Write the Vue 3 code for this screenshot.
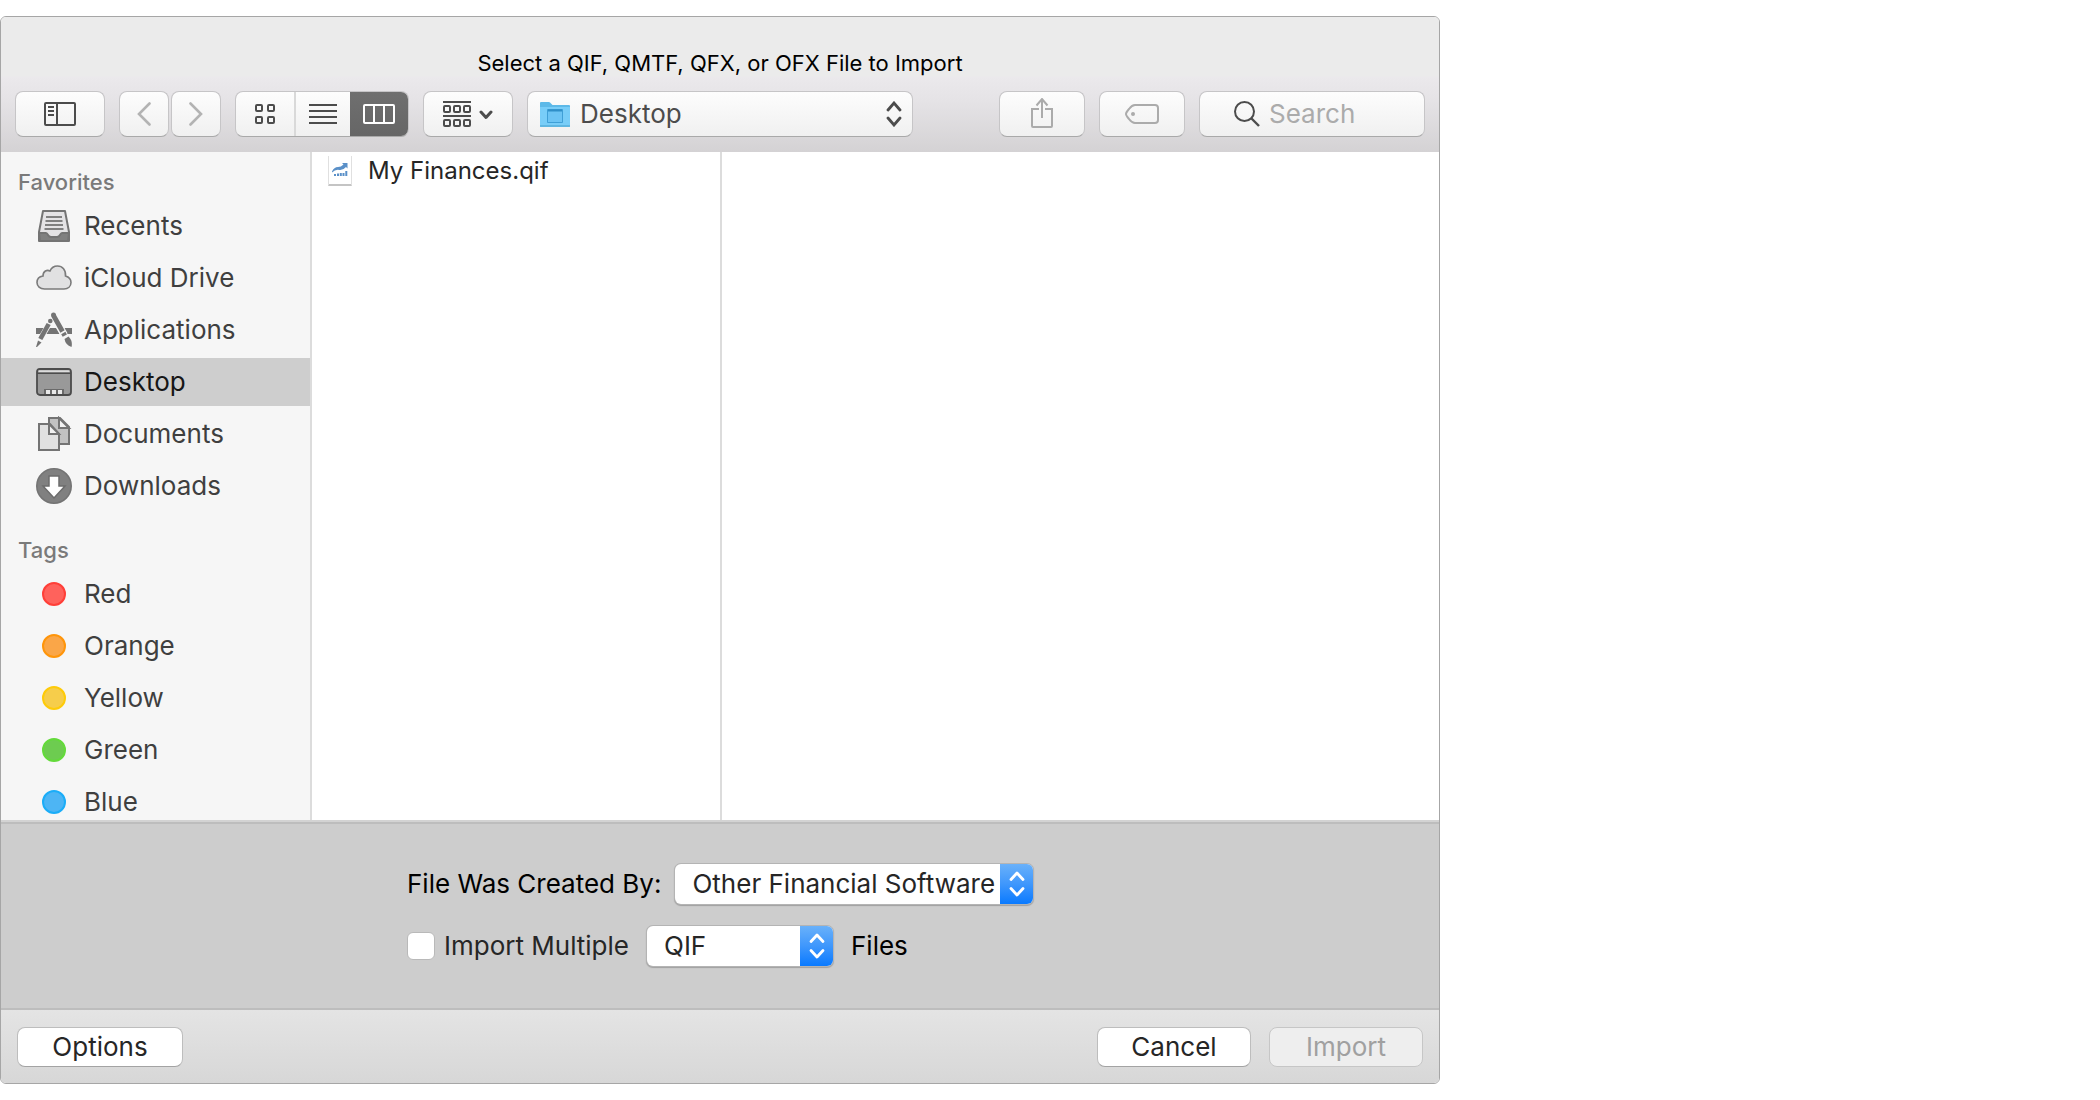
<script setup>
import { ref } from 'vue'

const favorites = [
  { id: 'recents', name: 'Recents' },
  { id: 'icloud', name: 'iCloud Drive' },
  { id: 'applications', name: 'Applications' },
  { id: 'desktop', name: 'Desktop' },
  { id: 'documents', name: 'Documents' },
  { id: 'downloads', name: 'Downloads' },
]
const tags = ['Red', 'Orange', 'Yellow', 'Green', 'Blue']

const place = ref('desktop')
const view = ref('columns')
const folder = ref('Desktop')
const search = ref('')
const createdBy = ref('Other Financial Software')
const multiple = ref(false)
const fileType = ref('QIF')
</script>

<template>
  <main class="dialog">
    <header class="head">
      <h1 class="title">Select a QIF, QMTF, QFX, or OFX File to Import</h1>
      <div class="toolbar">
        <button class="tool wide" type="button" aria-label="Toggle sidebar">
          <svg width="32" height="24" viewBox="0 0 32 24" fill="none" stroke="#4c4c4c" stroke-width="2">
            <rect x="1" y="1" width="30" height="22" rx="1" />
            <path d="M13 1v22M4 5h6M4 9h6M4 13h6" />
          </svg>
        </button>

        <div class="nav">
          <button class="tool arrow" type="button" aria-label="Back">
            <svg width="14" height="24" viewBox="0 0 14 24" fill="none" stroke="#b3b3b3" stroke-width="2.6" stroke-linecap="round">
              <path d="M12.5 1.5L2 12l10.5 10.5" />
            </svg>
          </button>
          <button class="tool arrow" type="button" aria-label="Forward">
            <svg width="14" height="24" viewBox="0 0 14 24" fill="none" stroke="#b3b3b3" stroke-width="2.6" stroke-linecap="round">
              <path d="M1.5 1.5L12 12 1.5 22.5" />
            </svg>
          </button>
        </div>

        <div class="views" role="group" aria-label="View">
          <button type="button" :class="{ on: view === 'icons' }" aria-label="Icons" @click="view = 'icons'">
            <svg width="20" height="20" viewBox="0 0 20 20" fill="none" stroke="currentColor" stroke-width="2">
              <rect x="1" y="1" width="6" height="6" rx="1" />
              <rect x="13" y="1" width="6" height="6" rx="1" />
              <rect x="1" y="13" width="6" height="6" rx="1" />
              <rect x="13" y="13" width="6" height="6" rx="1" />
            </svg>
          </button>
          <button type="button" :class="{ on: view === 'list' }" aria-label="List" @click="view = 'list'">
            <svg width="28" height="20" viewBox="0 0 28 20" stroke="currentColor" stroke-width="2">
              <path d="M0 1h28M0 7h28M0 13h28M0 19h28" />
            </svg>
          </button>
          <button type="button" :class="{ on: view === 'columns' }" aria-label="Columns" @click="view = 'columns'">
            <svg width="32" height="20" viewBox="0 0 32 20" fill="none" stroke="currentColor" stroke-width="2">
              <rect x="1" y="1" width="30" height="18" rx="1" />
              <path d="M11 1v18M21 1v18" />
            </svg>
          </button>
        </div>

        <button class="tool wide" type="button" aria-label="Arrange">
          <svg width="50" height="26" viewBox="0 0 50 26" fill="none" stroke="#4c4c4c" stroke-width="2">
            <path d="M0 1h28M0 15h28" />
            <rect x="1" y="5" width="6" height="6" rx="1" />
            <rect x="11" y="5" width="6" height="6" rx="1" />
            <rect x="21" y="5" width="6" height="6" rx="1" />
            <rect x="1" y="19" width="6" height="6" rx="1" />
            <rect x="11" y="19" width="6" height="6" rx="1" />
            <rect x="21" y="19" width="6" height="6" rx="1" />
            <path d="M38 11l5 5.5 5-5.5" stroke-width="3" stroke-linecap="round" stroke-linejoin="round" />
          </svg>
        </button>

        <div class="tool place">
          <svg width="30" height="26" viewBox="0 0 30 26">
            <path d="M0 2q0-1 1-1h8q1 0 2 1.5L12.5 4H29q1 0 1 1v3H0z" fill="#5db9e8" />
            <path d="M0 6h30v19q0 1-1 1H1q-1 0-1-1z" fill="#78cdf8" />
            <path d="M0 25h30" stroke="#57aeda" stroke-width="1.5" />
            <path d="M7.5 8.500h15v13h-15z" fill="#6cc4f4" stroke="#3f9fd6" />
            <path d="M8 9.500h14" stroke="#2f8fc8" stroke-width="2" />
          </svg>
          <select v-model="folder" aria-label="Folder">
            <option>Desktop</option>
            <option>Documents</option>
          </select>
          <svg class="stepper" width="16" height="26" viewBox="0 0 16 26" fill="none" stroke="#4c4c4c" stroke-width="2.8" stroke-linecap="round">
            <path d="M2 9l6-7 6 7M2 17l6 7 6-7" />
          </svg>
        </div>

        <span class="spring"></span>

        <button class="tool small" type="button" aria-label="Share">
          <svg width="22" height="32" viewBox="0 0 22 32" fill="none" stroke="#ababab" stroke-width="2">
            <path d="M8 11H1v17q0 1 1 1h18q1 0 1-1V11h-7M11 20V1M5.500 7.500L11 1 16.500 7.500" />
          </svg>
        </button>
        <button class="tool small" type="button" aria-label="Edit tags">
          <svg width="34" height="20" viewBox="0 0 34 20" fill="none" stroke="#ababab" stroke-width="2">
            <path d="M10 1h20q3 0 3 3v12q0 3-3 3H10Q7 19 4 15 1 11.500 1 10T4 5Q7 1 10 1z" />
            <circle cx="8" cy="10" r="2" fill="#ababab" stroke="none" />
          </svg>
        </button>
        <label class="tool search">
          <svg width="26" height="26" viewBox="0 0 26 26" fill="none" stroke="#4c4c4c" stroke-width="2">
            <circle cx="10.500" cy="10.500" r="9.500" />
            <path d="M17 17l8 8" stroke-width="2.4" />
          </svg>
          <input v-model="search" type="search" placeholder="Search" aria-label="Search" />
        </label>
      </div>
    </header>

    <section class="browser">
      <nav class="sidebar">
        <h2>Favorites</h2>
        <a
          v-for="item in favorites"
          :key="item.id"
          href="#"
          :class="{ current: item.id === place }"
          @click.prevent="place = item.id"
        >
          <svg v-if="item.id === 'recents'" class="glyph" viewBox="0 0 36 36">
            <path d="M7 3h22l4 21v9H3v-9z" fill="#e4e3e5" stroke="#747474" stroke-width="2" stroke-linejoin="round" />
            <path d="M10 9h16M9.500 13h17M9 17h18M8.500 21h19" stroke="#808080" stroke-width="2" />
            <path d="M3 25h7q1 0 2 2t3 2h6q2 0 3-2t2-2h7l-1 8H4z" fill="#808080" stroke="#747474" stroke-width="2" stroke-linejoin="round" />
          </svg>
          <svg v-else-if="item.id === 'icloud'" class="glyph" viewBox="0 0 36 36">
            <path d="M8.500 29C4 29 1 26 1 22.500c0-3.500 2.500-6 6-6.500 0-5 4-6.500 7-5C15.500 7.500 18 6 21.500 6c5 0 8.500 4 8 10C33 17 35 19.500 35 22.500c0 4-3 6.500-7 6.500z" fill="#e1e1e2" stroke="#7b7b7b" stroke-width="1.6" />
          </svg>
          <svg v-else-if="item.id === 'applications'" class="glyph" viewBox="0 0 36 36">
            <path d="M0 16h7.500L4 22H0zM14 16h6l3.500 6H10.500zM28 16h8v6h-4.500z" fill="#747474" />
            <path d="M17.500 3.500L28.500 23" stroke="#f6f6f6" stroke-width="7" />
            <circle cx="17.500" cy="3" r="2.500" fill="#747474" />
            <path d="M17.500 3.500L26.500 19.500M27.300 21L28.800 23.700" stroke="#747474" stroke-width="4.8" />
            <path d="M28.500 27l4-2.500q4.500 4.500 3 10.500-6-2-7-8z" fill="#747474" />
            <circle cx="14.300" cy="9" r="2.300" fill="#747474" />
            <path d="M12.700 12L4.300 27" stroke="#747474" stroke-width="4.600" />
            <path d="M2 28.500l3.500 2L1 35H0z" fill="#747474" />
          </svg>
          <svg v-else-if="item.id === 'desktop'" class="glyph" viewBox="0 0 36 36">
            <rect x="1" y="5" width="34" height="26" rx="3" fill="#999" stroke="#4c4c4c" stroke-width="1.8" />
            <path d="M2.500 7.300h31" stroke="#dcdcdc" stroke-width="2" />
            <path d="M1 9.200h34" stroke="#4c4c4c" stroke-width="1.6" />
            <path d="M8 30v-5h20v5z" fill="#6a6a6a" />
            <path d="M10 26h4v4h-4zM16 26h4v4h-4zM22 26h4v4h-4z" fill="#e8e8e8" />
          </svg>
          <svg v-else-if="item.id === 'documents'" class="glyph" viewBox="0 0 36 36" stroke="#747474" stroke-width="2">
            <path d="M13 2h11l9 9v17H13z" fill="#c2c2c2" />
            <path d="M23 2v10h10z" fill="#f2f2f2" />
            <path d="M3 8h11l9 10v16H3z" fill="#e1e1e1" />
            <path d="M13 8v10h10z" fill="#f2f2f2" />
          </svg>
          <svg v-else class="glyph" viewBox="0 0 36 36">
            <circle cx="18" cy="18" r="17.200" fill="#808080" stroke="#747474" stroke-width="1.6" />
            <path d="M13 8h10v10h6L18 30 7 18h6z" fill="#fff" stroke="#6c6c6c" stroke-width="1.5" />
          </svg>
          <span>{{ item.name }}</span>
        </a>

        <h2>Tags</h2>
        <a v-for="tag in tags" :key="tag" href="#" @click.prevent>
          <i class="dot" :class="tag.toLowerCase()"></i>
          <span>{{ tag }}</span>
        </a>
      </nav>

      <div class="column files">
        <button class="file" type="button">
          <svg width="26" height="32" viewBox="0 0 26 32">
            <rect x="1" y="2" width="24" height="29" rx="1" fill="#c4c4c4" />
            <rect x="2" y="0" width="22" height="29" fill="#fff" />
            <path d="M1.500 1v29M24.500 1v29" stroke="#e0e0e0" />
            <path d="M5 16.500q2-4.500 6-4.500 3 0 5.500-2.500L15 8h5.500v5.500L19 12q-3 3.500-6.500 3-4-1-7.500 2.500z" fill="#5a90c8" />
            <path d="M7 19h2v2H7zM10 18.500h2V21h-2zM12.800 18h2v3h-2zM15.500 18h2v3h-2zM18.300 16h2v5h-2z" fill="#5a90c8" />
          </svg>
          <span>My Finances.qif</span>
        </button>
      </div>
      <div class="column rest"></div>
    </section>

    <form class="options" @submit.prevent>
      <div class="row source-row">
        <label for="created-by">File Was Created By:</label>
        <div class="popup source">
          <select id="created-by" v-model="createdBy">
            <option>Other Financial Software</option>
            <option>Quicken</option>
          </select>
          <span class="cap">
            <svg width="16" height="26" viewBox="0 0 16 26" fill="none" stroke="#fff" stroke-width="2.8" stroke-linecap="round" stroke-linejoin="round">
              <path d="M2 8.500L8 2l6 6.500M2 17.500L8 24l6-6.500" />
            </svg>
          </span>
        </div>
      </div>
      <div class="row">
        <label class="check">
          <input v-model="multiple" type="checkbox" />
          <span>Import Multiple</span>
        </label>
        <div class="popup type">
          <select v-model="fileType" aria-label="File type">
            <option>QIF</option>
            <option>QFX</option>
            <option>OFX</option>
          </select>
          <span class="cap">
            <svg width="16" height="26" viewBox="0 0 16 26" fill="none" stroke="#fff" stroke-width="2.8" stroke-linecap="round" stroke-linejoin="round">
              <path d="M2 8.500L8 2l6 6.500M2 17.500L8 24l6-6.500" />
            </svg>
          </span>
        </div>
        <span>Files</span>
      </div>
    </form>

    <footer class="foot">
      <button class="push first" type="button">Options</button>
      <span class="spring"></span>
      <button class="push" type="button">Cancel</button>
      <button class="push" type="button" disabled>Import</button>
    </footer>
  </main>
</template>

<style>
body {
  background: #fff;
}
</style>

<style scoped>
.dialog,
.dialog * {
  box-sizing: border-box;
}
.dialog {
  width: 100%;
  max-width: 1440px;
  margin-top: 16px;
  border: 1px solid #a6a6a6;
  border-radius: 6px;
  overflow: hidden;
  font-family: Inter, "Liberation Sans", sans-serif;
  font-size: 26px;
  line-height: 32px;
  color: #000;
}
svg {
  display: block;
  flex: none;
}
button,
input,
select {
  margin: 0;
  padding: 0;
  border: 0;
  background: none;
  font: inherit;
  color: inherit;
  outline: none;
}
select {
  appearance: none;
  width: 100%;
}
a {
  color: inherit;
  text-decoration: none;
}
.spring {
  flex: 1;
}

/* title and toolbar */
.head {
  padding: 30px 14px 15px;
  background: linear-gradient(#ebebeb 0, #ebebeb 59px, #ebe9ec 60px, #e5e3e6 84px, #d4d2d4 100%);
}
.title {
  margin: 0;
  font-size: 22px;
  line-height: 32px;
  font-weight: 400;
  text-align: center;
}
.toolbar {
  display: flex;
  gap: 14px;
  margin-top: 12px;
}
.tool,
.views {
  height: 46px;
  border: 1px solid #c6c5c7;
  border-bottom-color: #a9a9a9;
  border-radius: 8px;
  background: linear-gradient(#fdfdfd, #f0f0f0);
}
.tool {
  display: flex;
  align-items: center;
  justify-content: center;
  flex: none;
}
.tool.wide {
  width: 90px;
}
.nav {
  display: flex;
  gap: 2px;
}
.arrow {
  width: 50px;
}
.small {
  width: 86px;
}
.views {
  display: flex;
  width: 174px;
  overflow: hidden;
  color: #4c4c4c;
}
.views button {
  display: flex;
  align-items: center;
  justify-content: center;
  width: 54px;
}
.views button:first-child {
  width: 60px;
  border-right: 2px solid #d9d9d9;
}
.views button:last-child {
  flex: 1;
}
.views .on {
  background: linear-gradient(#6f6f6f, #666);
  color: #fff;
}
.place {
  position: relative;
  width: 386px;
  gap: 10px;
  padding-left: 12px;
  color: #4c4c4c;
}
.stepper {
  position: absolute;
  right: 10px;
  pointer-events: none;
}
.search {
  width: 226px;
  gap: 9px;
  padding-left: 34px;
}
.search input {
  flex: 1;
  min-width: 0;
}
.search input::placeholder {
  color: #ababab;
  opacity: 1;
}

/* file browser */
.browser {
  display: flex;
  height: 668px;
  background: #fff;
}
.sidebar {
  flex: none;
  width: 311px;
  padding-top: 10px;
  overflow: hidden;
  border-right: 2px solid #dcdcdc;
  background: #f6f6f6;
  color: #3f3f3f;
}
.sidebar h2 {
  margin: 0;
  padding: 4px 17px;
  font-size: 22px;
  line-height: 32px;
  font-weight: 500;
  color: #7a7a7a;
}
.sidebar a + h2 {
  margin-top: 20px;
}
.sidebar a {
  display: flex;
  align-items: center;
  gap: 12px;
  height: 48px;
  margin-bottom: 4px;
  padding-left: 35px;
}
.sidebar .current {
  background: #cecece;
  color: #161616;
}
.glyph {
  width: 36px;
  height: 36px;
}
.dot {
  width: 24px;
  height: 24px;
  margin: 0 6px;
  border: 2px solid;
  border-radius: 50%;
}
.red {
  background: #ff625c;
  border-color: #ff3f38;
}
.orange {
  background: #faa648;
  border-color: #ff950a;
}
.yellow {
  background: #f6cd4b;
  border-color: #fecb09;
}
.green {
  background: #6dcc50;
  border-color: #63da3a;
}
.blue {
  background: #4db5f4;
  border-color: #1badf8;
}
.files {
  flex: none;
  width: 410px;
  border-right: 2px solid #dcdcdc;
}
.rest {
  flex: 1;
}
.file {
  display: flex;
  align-items: center;
  gap: 15px;
  width: 100%;
  height: 38px;
  padding-left: 15px;
  font-size: 24px;
  color: #262626;
}

/* import settings */
.options {
  display: flex;
  flex-direction: column;
  gap: 22px;
  padding: 42px 16px 42px 406px;
  border-top: 2px solid #d3d3d3;
  border-bottom: 2px solid #bdbdbd;
  background: #cdcdcd;
  box-shadow: inset 0 2px #bdbdbd;
}
.row {
  display: flex;
  align-items: center;
  gap: 18px;
}
.source-row {
  gap: 14px;
}
.popup {
  position: relative;
  height: 40px;
  border-radius: 6px;
  background: #fff;
  box-shadow: 0 0 0 1px #b4b4b4, 0 1px 1px 1px #a0a0a0;
  color: #262626;
}
.popup select {
  height: 40px;
  padding-left: 17px;
}
.source {
  width: 358px;
}
.type {
  width: 186px;
}
.cap {
  position: absolute;
  top: 0;
  right: 0;
  bottom: 0;
  display: flex;
  align-items: center;
  justify-content: center;
  width: 33px;
  border-radius: 0 6px 6px 0;
  background: linear-gradient(#69b1fa, #3f97fc 50%, #0a7aff);
  pointer-events: none;
}
.check {
  display: flex;
  align-items: center;
  gap: 9px;
  color: #262626;
}
.check input {
  appearance: none;
  width: 28px;
  height: 28px;
  border: 1px solid #b9b9b9;
  border-radius: 6px;
  background: #fff;
}
.check input:checked {
  background: #0a7aff;
}

/* buttons */
.foot {
  display: flex;
  gap: 18px;
  padding: 17px 16px 16px;
  background: linear-gradient(#e4e4e4, #d7d7d7);
}
.push {
  width: 154px;
  height: 40px;
  border: 1px solid #bdbdbd;
  border-bottom-color: #a3a3a3;
  border-radius: 8px;
  background: #fff;
  color: #262626;
}
.push.first {
  width: 166px;
}
.push:disabled {
  border-color: #c6c6c6;
  background: #eee;
  color: #a0a0a0;
}
</style>
